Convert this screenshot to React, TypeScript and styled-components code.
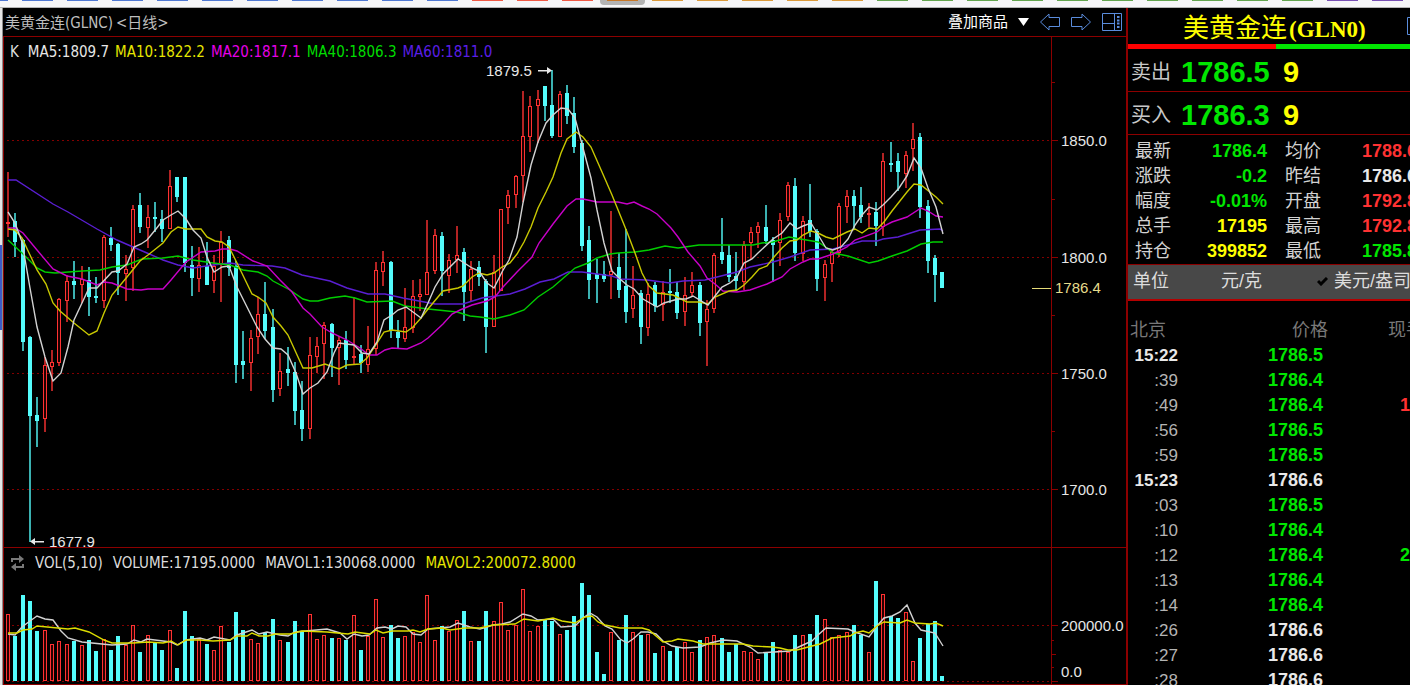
import React from "react";
import styled, { createGlobalStyle } from "styled-components";

const GlobalStyle = createGlobalStyle`
  * { box-sizing: border-box; }
  body { margin: 0; background: #000; overflow: hidden; }
  button { margin: 0; padding: 0; border: 0; background: none; color: inherit; font: inherit; cursor: pointer; }
`;

const ui = `"DejaVu Sans Condensed", "DejaVu Sans", "Noto Sans CJK SC", sans-serif`;
const num = `"Liberation Sans", "Noto Sans CJK SC", sans-serif`;

const red = "#ff3232";
const green = "#00e600";
const white = "#e8e8e8";
const yellow = "#ffff00";
const cyan = "#54fcfc";
const line = "#8c0000";

/* ---------- data ---------- */

type Candle = [kind: "R" | "C", high: number, top: number, bottom: number, low: number, volumeTop: number];

const candles: Candle[] = [
  ["R", 172, 222, 224, 237, 614], ["C", 213, 221, 242, 257, 636], ["C", 239, 240, 342, 351, 595], ["C", 336, 337, 416, 542, 601],
  ["C", 397, 415, 421, 447, 631], ["R", 357, 365, 419, 432, 630], ["R", 350, 362, 367, 391, 644], ["R", 298, 299, 363, 366, 641],
  ["R", 275, 281, 301, 322, 644], ["C", 261, 281, 285, 299, 641], ["R", 266, 279, 285, 303, 645], ["C", 267, 280, 297, 316, 640],
  ["C", 277, 296, 297, 303, 651], ["R", 235, 237, 301, 308, 639], ["C", 227, 238, 245, 251, 650], ["C", 243, 244, 273, 295, 636],
  ["R", 255, 269, 274, 301, 645], ["R", 205, 209, 268, 291, 625], ["C", 193, 205, 227, 233, 652], ["R", 205, 217, 228, 248, 635],
  ["C", 202, 217, 218, 232, 642], ["C", 210, 219, 229, 242, 650], ["R", 170, 186, 229, 229, 630], ["C", 177, 177, 197, 202, 668],
  ["C", 177, 177, 263, 272, 611], ["C", 246, 265, 278, 296, 636], ["R", 247, 265, 279, 292, 639], ["C", 242, 266, 285, 285, 644],
  ["R", 255, 266, 281, 293, 650], ["R", 231, 242, 265, 302, 626], ["C", 236, 240, 268, 276, 642], ["C", 261, 266, 365, 383, 612],
  ["C", 331, 361, 365, 379, 630], ["R", 330, 338, 363, 391, 639], ["R", 297, 314, 337, 354, 643], ["C", 282, 314, 331, 339, 633],
  ["C", 309, 327, 390, 402, 619], ["R", 353, 371, 389, 396, 640], ["C", 347, 369, 373, 386, 642], ["C", 362, 372, 411, 425, 621],
  ["C", 381, 410, 429, 441, 632], ["R", 337, 355, 429, 439, 614], ["R", 337, 346, 357, 373, 639], ["R", 322, 325, 344, 379, 635],
  ["C", 323, 324, 348, 377, 638], ["R", 336, 340, 348, 385, 638], ["C", 331, 340, 360, 369, 640], ["R", 297, 356, 357, 364, 615],
  ["C", 345, 354, 363, 373, 650], ["R", 326, 349, 365, 372, 636], ["R", 262, 270, 349, 355, 599], ["R", 251, 262, 272, 286, 637],
  ["C", 261, 262, 331, 338, 625], ["C", 320, 332, 338, 349, 638], ["R", 288, 327, 339, 342, 636], ["R", 280, 296, 328, 333, 632],
  ["R", 279, 294, 297, 311, 642], ["R", 220, 272, 295, 295, 595], ["R", 229, 235, 271, 274, 640], ["C", 232, 236, 271, 296, 626],
  ["R", 254, 260, 276, 293, 631], ["R", 226, 255, 260, 273, 620], ["C", 248, 252, 292, 321, 611], ["R", 261, 269, 291, 302, 641],
  ["C", 261, 267, 277, 286, 641], ["C", 279, 281, 327, 353, 611], ["R", 255, 272, 327, 327, 621], ["R", 209, 209, 291, 291, 602],
  ["R", 190, 195, 208, 224, 630], ["R", 175, 176, 195, 208, 625], ["R", 91, 136, 176, 202, 589], ["R", 96, 106, 137, 152, 631],
  ["R", 90, 99, 106, 143, 626], ["C", 86, 86, 106, 121, 620], ["C", 70, 105, 136, 138, 621], ["R", 91, 94, 137, 137, 634],
  ["C", 85, 93, 116, 124, 630], ["C", 97, 113, 147, 153, 616], ["C", 140, 143, 246, 251, 583], ["C", 226, 240, 280, 299, 595],
  ["C", 259, 274, 279, 303, 652], ["C", 261, 274, 279, 282, 674], ["R", 211, 271, 275, 299, 632], ["C", 253, 267, 290, 298, 640],
  ["C", 229, 286, 312, 323, 615], ["R", 266, 295, 309, 318, 632], ["C", 290, 293, 327, 344, 635], ["R", 283, 294, 328, 336, 634],
  ["C", 282, 285, 306, 312, 653], ["R", 281, 292, 305, 321, 646], ["C", 269, 291, 293, 303, 651], ["C", 282, 292, 313, 319, 647],
  ["R", 277, 295, 312, 326, 642], ["R", 272, 285, 293, 297, 652], ["C", 282, 285, 323, 336, 640], ["R", 300, 309, 322, 366, 637],
  ["R", 253, 255, 309, 313, 635], ["C", 218, 252, 260, 264, 638], ["C", 245, 255, 277, 282, 652], ["C", 252, 276, 281, 291, 644],
  ["R", 241, 245, 282, 290, 651], ["R", 227, 232, 243, 259, 652], ["R", 222, 226, 233, 248, 659], ["C", 205, 227, 241, 244, 653],
  ["C", 237, 240, 245, 282, 642], ["R", 213, 220, 243, 266, 650], ["R", 182, 185, 217, 221, 652], ["C", 178, 186, 253, 261, 635],
  ["R", 216, 221, 254, 261, 635], ["C", 184, 220, 232, 237, 634], ["C", 229, 231, 279, 291, 615], ["R", 260, 264, 278, 301, 619],
  ["R", 250, 252, 264, 282, 637], ["R", 203, 206, 253, 257, 635], ["R", 190, 196, 207, 223, 632], ["C", 190, 196, 206, 229, 625],
  ["C", 187, 205, 217, 223, 635], ["R", 203, 213, 214, 227, 652], ["C", 202, 212, 226, 246, 581], ["R", 153, 161, 227, 236, 594],
  ["C", 142, 163, 164, 172, 616], ["C", 153, 161, 172, 191, 618], ["R", 151, 155, 174, 188, 612], ["R", 123, 139, 149, 171, 661],
  ["C", 133, 137, 207, 218, 638], ["C", 200, 206, 261, 273, 624], ["C", 255, 258, 275, 302, 621], ["C", 272, 272, 288, 288, 676],
];

const averages: { color: string; points: string }[] = [
  {
    color: "#5a1ed2",
    points:
      "8,180 16,180 53,204 68,212 97,229 117,240 133,247 147,253 163,260 178,265 193,268 213,265 230,263 243,265 272,266 285,268 302,275 330,281 347,288 368,294 385,294 403,298 435,304 463,304 482,298 510,294 525,289 540,282 554,279 568,272 582,272 612,276 620,279 647,280 670,283 683,281 705,280 737,272 750,267 773,262 790,257 810,250 833,249 848,245 862,241 877,241 883,239 898,237 920,230 940,229 943,231",
  },
  {
    color: "#00cd00",
    points:
      "8,240 22,253 37,268 45,272 55,273 82,271 100,270 112,267 127,265 142,259 163,258 178,256 193,260 213,263 230,265 243,270 258,272 267,276 273,281 290,290 303,299 310,301 318,301 330,298 345,296 355,298 367,302 392,301 405,306 428,309 457,312 470,316 480,317 494,319 510,315 524,310 538,297 553,287 575,268 588,263 597,258 610,254 618,253 635,252 649,250 665,246 678,248 699,245 753,245 762,243 773,242 789,237 818,242 827,248 833,253 848,256 869,263 878,261 892,256 907,251 921,244 933,242 943,242",
  },
  {
    color: "#c800c8",
    points:
      "8,228 15,228 23,233 37,250 53,269 67,276 82,279 97,285 104,282 112,283 127,289 141,290 148,289 163,289 171,280 186,262 201,252 215,251 222,249 230,249 237,251 253,261 267,266 280,280 292,292 303,308 310,314 322,327 332,333 347,340 360,348 369,355 377,355 385,350 392,348 407,349 421,343 428,338 443,324 452,314 460,310 472,305 487,301 495,297 503,287 517,272 524,265 532,257 539,243 553,224 567,206 576,199 583,199 597,202 618,202 627,204 634,202 642,206 649,209 657,214 671,228 678,237 688,252 700,266 707,278 715,284 723,291 737,292 750,290 767,284 782,277 790,269 803,262 810,259 818,259 833,254 847,247 855,240 877,232 884,226 892,222 907,217 921,208 928,211 936,216 943,217",
  },
  {
    color: "#c8c800",
    points:
      "8,229 15,230 22,238 30,255 37,270 46,284 53,303 60,311 74,323 89,335 97,331 104,313 112,295 127,277 140,261 148,255 163,243 171,232 178,227 186,229 201,229 207,237 215,241 222,242 229,247 237,263 252,294 258,297 266,303 273,317 281,326 288,335 303,368 312,368 325,364 339,369 347,365 360,364 367,358 377,343 384,332 392,330 406,332 413,327 421,318 428,309 443,291 458,288 463,286 472,277 479,273 487,275 494,273 502,267 510,263 517,254 524,242 531,227 538,208 546,192 553,177 561,153 567,139 576,132 583,137 591,147 602,172 612,195 627,232 635,253 642,273 649,286 657,293 673,295 687,302 699,302 708,304 715,297 729,291 737,290 744,285 752,277 759,269 767,266 774,257 782,248 790,241 797,240 803,235 811,231 818,233 826,237 833,239 847,232 855,229 862,233 869,228 877,229 884,222 892,211 907,192 914,184 921,185 936,197 943,204",
  },
  {
    color: "#d2d2d2",
    points:
      "8,212 15,223 22,242 30,288 37,327 45,357 53,381 61,373 68,347 74,320 82,303 89,288 97,288 112,272 118,271 127,264 134,247 141,244 147,240 156,229 163,220 171,215 178,211 186,219 193,230 201,238 207,257 214,272 222,267 229,266 237,287 247,307 257,327 265,339 273,348 281,349 288,355 296,373 303,394 310,388 318,383 327,372 334,353 339,343 354,345 362,353 369,354 377,342 384,320 392,315 398,310 406,307 413,312 421,318 428,303 435,287 443,274 458,259 472,268 479,271 487,283 494,288 502,272 509,260 517,237 523,203 531,165 538,142 546,123 553,115 561,108 568,109 575,118 583,148 591,178 597,210 604,243 612,271 620,279 627,285 634,289 643,299 657,307 664,303 678,299 686,299 693,296 708,305 715,296 722,287 730,283 737,277 744,263 752,259 758,253 773,239 782,233 790,223 797,229 803,226 811,223 817,233 826,248 833,250 841,247 848,239 855,225 862,215 869,207 877,210 883,205 891,197 899,188 907,176 914,158 921,168 928,188 936,207 943,234",
  },
];

const volumeAverages: { color: string; points: string }[] = [
  {
    color: "#d2d2d2",
    points:
      "8,634 15,635 22,627 30,621 37,616 45,619 53,620 61,631 68,638 82,642 112,645 127,644 134,640 141,642 147,639 171,642 177,645 186,640 200,638 207,640 214,637 230,640 237,635 252,630 259,634 267,632 280,635 288,636 295,632 327,629 340,633 347,639 354,634 362,636 369,635 377,628 385,627 392,629 398,626 406,627 413,634 421,635 428,629 450,627 458,623 470,627 480,629 487,627 493,625 502,624 510,622 523,614 531,616 538,620 553,619 561,627 575,626 583,618 590,613 597,617 605,626 612,629 620,639 627,643 633,639 641,632 648,632 656,634 663,641 672,646 683,648 700,647 710,643 723,640 737,641 750,647 758,653 790,651 803,645 812,641 818,635 826,628 848,629 855,632 869,637 877,626 884,618 892,616 900,612 907,605 915,623 921,630 935,633 943,646",
  },
  {
    color: "#dcdc00",
    points:
      "8,633 17,633 23,630 32,629 37,626 68,629 75,628 89,632 104,640 112,643 133,643 148,642 163,643 171,641 178,645 186,640 200,640 213,641 230,640 237,636 247,636 252,633 259,636 268,636 275,634 290,634 302,631 327,632 348,634 355,632 370,634 376,630 383,633 392,631 408,631 413,630 420,632 428,629 442,628 450,630 465,628 480,628 493,625 515,624 524,619 538,621 553,618 562,621 575,623 585,617 592,616 598,622 605,625 620,628 642,628 649,630 663,642 672,641 678,639 693,641 703,644 743,644 753,646 772,647 780,648 788,650 797,650 812,646 820,644 832,638 850,636 855,633 863,631 869,633 877,626 884,622 900,623 907,620 915,623 930,624 936,623 943,626",
  },
];

const priceLevels = [
  { y: 140, label: "1850.0" },
  { y: 257, label: "1800.0" },
  { y: 373, label: "1750.0" },
  { y: 489, label: "1700.0" },
];

const tabColors = [
  ...Array(11).fill("#5078d2"),
  ...Array(3).fill("#f05a46"),
  "#c87828",
  ...Array(5).fill("#dc9b3c"),
  ...Array(10).fill("#64a550"),
  ...Array(2).fill("#7850b4"),
];

const quotes: [string, string, string, string, string, string][] = [
  ["最新", "1786.4", green, "均价", "1788.6", red],
  ["涨跌", "-0.2", green, "昨结", "1786.6", white],
  ["幅度", "-0.01%", green, "开盘", "1792.8", red],
  ["总手", "17195", yellow, "最高", "1792.8", red],
  ["持仓", "399852", yellow, "最低", "1785.8", green],
];

const ticks: { time: string; price: string; color: string; lots?: string; lotsColor?: string }[] = [
  { time: "15:22", price: "1786.5", color: green },
  { time: ":39", price: "1786.4", color: green },
  { time: ":49", price: "1786.4", color: green, lots: "1", lotsColor: red },
  { time: ":56", price: "1786.5", color: green },
  { time: ":59", price: "1786.5", color: green },
  { time: "15:23", price: "1786.6", color: white },
  { time: ":03", price: "1786.5", color: green },
  { time: ":10", price: "1786.4", color: green },
  { time: ":12", price: "1786.4", color: green, lots: "2", lotsColor: green },
  { time: ":13", price: "1786.4", color: green },
  { time: ":14", price: "1786.4", color: green },
  { time: ":26", price: "1786.6", color: white },
  { time: ":27", price: "1786.6", color: white },
  { time: ":28", price: "1786.6", color: white },
];

/* ---------- shell ---------- */

const Screen = styled.div`
  display: flex;
  flex-direction: column;
  height: 100vh;
  overflow: hidden;
  background: #000;
`;

const TabStrip = styled.div`
  display: flex;
  flex: none;
  height: 8px;
  overflow: hidden;
  background: #f6f6f8;
  border-bottom: 1px solid #b4b4b4;
`;

const TabStub = styled.span<{ $color: string; $active: boolean }>`
  flex: none;
  width: 45px;
  height: ${(p) => (p.$active ? 5 : 1)}px;
  border: solid ${(p) => (p.$active ? "#b4b4b4" : "transparent")};
  border-width: 0 7px;
  border-radius: 0 0 4px 4px;
  background: ${(p) => (p.$active ? "#b4b4b4" : p.$color)};
  background-clip: ${(p) => (p.$active ? "border-box" : "padding-box")};
  &:first-child { margin-left: -30px; }
  &::before {
    content: "";
    display: block;
    height: 1px;
    background: ${(p) => p.$color};
  }
`;

const Workspace = styled.div`
  display: grid;
  grid-template-columns: 3px minmax(0, 1fr) 284px;
  flex: 1;
  min-height: 0;
`;

const Edge = styled.div`
  padding-top: 237px;
  background: #e6e6e6;
  border-right: 1px solid #8c8c8c;
`;

const EdgeThumb = styled.div`
  height: 85px;
  background: #3c5ac8;
`;

/* ---------- chart ---------- */

const Chart = styled.main`
  display: flex;
  flex-direction: column;
  min-width: 0;
`;

const ChartHeader = styled.header`
  display: flex;
  align-items: center;
  justify-content: space-between;
  flex: none;
  height: 29px;
  padding: 0 4px 0 2px;
  border-bottom: 1px solid ${line};
  font: 15px/28px ${ui};
`;

const ChartTitle = styled.h1`
  display: flex;
  gap: 3px;
  margin: 0;
  padding-top: 2px;
  font: inherit;
  color: #bebebe;
  white-space: pre;
`;

const Tools = styled.div`
  display: flex;
  align-items: center;
  gap: 11px;
  color: #fff;
`;

const ToolButton = styled.button`
  display: flex;
  align-items: center;
  gap: 10px;
`;

const Pane = styled.section<{ $height: number }>`
  display: flex;
  flex: none;
  height: ${(p) => p.$height}px;
  border-left: 1px solid ${line};
  border-bottom: 1px solid ${line};
`;

const PaneMain = styled.div`
  display: flex;
  flex-direction: column;
  flex: 1;
  min-width: 0;
`;

const Legend = styled.div<{ $gap: number }>`
  display: flex;
  align-items: center;
  flex: none;
  gap: ${(p) => p.$gap}px;
  height: 22px;
  margin-top: 4px;
  padding-left: 6px;
  font: 15px/22px ${ui};
  white-space: nowrap;
`;

const LegendItem = styled.span<{ $color?: string }>`
  color: ${(p) => p.$color || "#dcdcdc"};
`;

const LegendKind = styled(LegendItem)`
  margin-right: 3px;
`;

const Plot = styled.svg`
  display: block;
  flex: 1;
  width: 100%;
  min-height: 0;
  overflow: hidden;
  font: 15px ${num};
`;

const Axis = styled.svg`
  display: block;
  flex: none;
  width: 75px;
  height: 100%;
  border-left: 1px solid ${line};
  font: 15px ${num};
`;

/* ---------- quote panel ---------- */

const Panel = styled.aside`
  display: flex;
  flex-direction: column;
  min-width: 0;
  overflow: hidden;
  border-left: 2px solid ${line};
  font: 18px/25px ${num};
`;

const PanelHeader = styled.header`
  display: flex;
  align-items: center;
  justify-content: space-between;
  flex: none;
  height: 36px;
  padding-left: 55px;
`;

const Contract = styled.h2`
  margin: 0;
  color: ${yellow};
  font: 26px/36px "Noto Sans CJK SC", sans-serif;
  white-space: nowrap;
`;

const ContractCode = styled.span`
  margin-left: 2px;
  font: bold 23px "Liberation Serif", serif;
`;

const RatioBar = styled.div`
  display: flex;
  flex: none;
  height: 5px;
`;

const Ratio = styled.span<{ $color: string; $width?: number }>`
  background: ${(p) => p.$color};
  ${(p) => (p.$width ? `width: ${p.$width}px;` : "flex: 1;")}
`;

const Depth = styled.div`
  display: flex;
  align-items: center;
  flex: none;
  height: 43px;
  padding: 4px 0 0 3px;
  border-bottom: 1px solid ${line};
`;

const DepthLabel = styled.span`
  width: 50px;
  color: #c8c8c8;
  font-size: 20px;
`;

const DepthNumber = styled.span<{ $color: string; $width?: number }>`
  width: ${(p) => (p.$width ? `${p.$width}px` : "auto")};
  color: ${(p) => p.$color};
  font-size: 29px;
  font-weight: bold;
`;

const Quotes = styled.dl`
  display: grid;
  grid-template-columns: 48px 84px 18px 60px 72px;
  flex: none;
  margin: 0;
  padding: 4px 0 0 7px;
  border-bottom: 1px solid ${line};
`;

const QuoteLabel = styled.dt<{ $second?: boolean }>`
  grid-column: ${(p) => (p.$second ? 4 : 1)};
  color: #d2d2d2;
`;

const QuoteValue = styled.dd<{ $color: string; $second?: boolean }>`
  grid-column: ${(p) => (p.$second ? 5 : 2)};
  margin: 0;
  color: ${(p) => p.$color};
  font-weight: bold;
  text-align: right;
`;

const UnitBar = styled.div`
  display: flex;
  align-items: center;
  flex: none;
  height: 36px;
  padding: 0 0 2px 5px;
  background: #484848;
  border-bottom: 2px solid #b40000;
  color: #dcdcdc;
  white-space: nowrap;
`;

const UnitLabel = styled.span`
  flex: none;
  width: 88px;
`;

const UnitButton = styled.button<{ $width: number }>`
  display: flex;
  align-items: center;
  flex: none;
  gap: 6px;
  width: ${(p) => p.$width}px;
`;

const TickTable = styled.table`
  flex: none;
  width: 320px;
  margin-top: 17px;
  border-collapse: collapse;
  table-layout: fixed;
`;

const HeadCell = styled.th<{ $width: number; $align: string; $pad: number }>`
  width: ${(p) => p.$width}px;
  height: 25px;
  padding: 0 ${(p) => p.$pad}px 0 2px;
  color: #787878;
  font-weight: normal;
  line-height: 25px;
  text-align: ${(p) => p.$align};
`;

const TimeCell = styled.td<{ $strong: boolean }>`
  height: 25px;
  padding: 0;
  color: ${(p) => (p.$strong ? white : "#b4b4b4")};
  font-size: 17px;
  font-weight: ${(p) => (p.$strong ? "bold" : "normal")};
  text-align: right;
`;

const NumberCell = styled.td<{ $color?: string; $left?: boolean }>`
  padding: ${(p) => (p.$left ? "0 0 0 72px" : "0 5px 0 0")};
  color: ${(p) => p.$color};
  font-weight: bold;
  text-align: ${(p) => (p.$left ? "left" : "right")};
`;

/* ---------- drawings ---------- */

const candleX = (i: number) => Math.round(7.357 * i + 4);

function CandleMark({ candle, index }: { candle: Candle; index: number }) {
  const [kind, high, top, bottom, low] = candle;
  const x = candleX(index);
  const color = kind === "R" ? red : cyan;
  return (
    <g>
      <rect x={x - 0.7} y={high} width={1.4} height={Math.max(low - high, 1)} fill={color} />
      {kind === "R" && bottom - top > 2 ? (
        <rect x={x - 1.5} y={top + 0.5} width={3} height={bottom - top - 1} fill="#1e0000" stroke={color} />
      ) : (
        <rect x={x - 2} y={top} width={4} height={Math.max(bottom - top, 2)} fill={color} />
      )}
    </g>
  );
}

function VolumeMark({ candle, index }: { candle: Candle; index: number }) {
  const x = candleX(index);
  const top = candle[5];
  return candle[0] === "R" ? (
    <rect x={x - 1.5} y={top + 0.5} width={3} height={681 - top - 1} fill="#280000" stroke={red} />
  ) : (
    <rect x={x - 2} y={top} width={4} height={681 - top} fill={cyan} />
  );
}

function GridLine({ y }: { y: number }) {
  return <line x1={3} x2="100%" y1={y + 0.5} y2={y + 0.5} stroke="#820000" strokeDasharray="2 3" />;
}

function Arrow({ flip }: { flip?: boolean }) {
  return (
    <svg width="20" height="18" viewBox="0 0 20 18" fill="none" stroke="#5a8cdc">
      <path d={flip ? "M19.5 9L11 1V4.5H.5V13.5H11V17Z" : "M.5 9L9 1V4.5H19.5V13.5H9V17Z"} />
    </svg>
  );
}

export default function App() {
  return (
    <Screen>
      <GlobalStyle />
      <TabStrip>
        {tabColors.map((color, i) => (
          <TabStub key={i} $color={color} $active={i === 14} />
        ))}
      </TabStrip>
      <Workspace>
        <Edge>
          <EdgeThumb />
        </Edge>
        <Chart>
          <ChartHeader>
            <ChartTitle>
              <span>美黄金连(GLNC)</span>
              <span>{"<日线>"}</span>
            </ChartTitle>
            <Tools>
              <ToolButton type="button">
                叠加商品
                <svg width="11" height="8" viewBox="0 0 11 8" fill="#fff">
                  <path d="M0 0H11L5.5 8Z" />
                </svg>
              </ToolButton>
              <ToolButton type="button" aria-label="上一个">
                <Arrow />
              </ToolButton>
              <ToolButton type="button" aria-label="下一个">
                <Arrow flip />
              </ToolButton>
              <ToolButton type="button" aria-label="布局">
                <svg width="20" height="18" viewBox="0 0 20 18" fill="none" stroke="#5a8cdc">
                  <path d="M.5 .5H19.5V17.5H.5ZM12.5 .5V17.5M.5 10.5H12.5" />
                  <path d="M15 4H17.5M15 7.500H17.5M15 10.500H17.5M15 14H17.5" strokeWidth="2" />
                </svg>
              </ToolButton>
            </Tools>
          </ChartHeader>

          <Pane $height={511}>
            <PaneMain>
              <Legend $gap={6}>
                <LegendKind>K</LegendKind>
                <LegendItem $color="#e6e6e6">MA5:1809.7</LegendItem>
                <LegendItem $color="#e6e600">MA10:1822.2</LegendItem>
                <LegendItem $color="#e600e6">MA20:1817.1</LegendItem>
                <LegendItem $color="#00dc00">MA40:1806.3</LegendItem>
                <LegendItem $color="#5a1ee6">MA60:1811.0</LegendItem>
              </Legend>
              <Plot>
                <g transform="translate(0 -63)">
                  {priceLevels.map((level) => (
                    <GridLine key={level.y} y={level.y} />
                  ))}
                  {candles.map((candle, i) => (
                    <CandleMark key={i} candle={candle} index={i} />
                  ))}
                  <g transform="translate(-4 0)" fill="none" strokeWidth="1.4">
                    {averages.map((average) => (
                      <polyline key={average.color} points={average.points} stroke={average.color} />
                    ))}
                  </g>
                  <g fill={white}>
                    <text x={482} y={76}>1879.5</text>
                    <path d="M534 70H543V67L548 70.500L543 74V71.500H534Z" />
                    <text x={45} y={547}>1677.9</text>
                    <path d="M40 541H31V538L26 541.500L31 545V542.500H40Z" />
                  </g>
                </g>
                <svg x="100%" y="0" overflow="visible">
                  <path d="M-19 225.500H0" stroke="#e6dc78" />
                </svg>
              </Plot>
            </PaneMain>
            <Axis fill="#e6e6e6">
              <g transform="translate(0 -37)">
                {priceLevels.map((level) => (
                  <g key={level.y}>
                    <path d={`M0 ${level.y}.5H6`} stroke={line} />
                    <path d={`M0 ${level.y - 58}.5H3`} stroke={line} />
                    <text x={9} y={level.y + 6}>{level.label}</text>
                  </g>
                ))}
                <text x={3} y={293} fill="#e6dc8c">1786.4</text>
              </g>
            </Axis>
          </Pane>

          <Pane $height={137}>
            <PaneMain>
              <Legend $gap={10}>
                <svg width="15" height="16" viewBox="0 0 15 16" fill="none" stroke="#787878" strokeWidth="2">
                  <path d="M2 7V4H10M13 9V12H5" />
                  <path d="M9 0L14 4L9 8ZM6 8L1 12L6 16Z" fill="#787878" stroke="none" />
                </svg>
                <LegendItem>VOL(5,10)</LegendItem>
                <LegendItem>VOLUME:17195.0000</LegendItem>
                <LegendItem>MAVOL1:130068.0000</LegendItem>
                <LegendItem $color="#e6e600">MAVOL2:200072.8000</LegendItem>
              </Legend>
              <Plot>
                <g transform="translate(0 -574)">
                  <GridLine y={625} />
                  <GridLine y={681} />
                  {candles.map((candle, i) => (
                    <VolumeMark key={i} candle={candle} index={i} />
                  ))}
                  <g transform="translate(-4 0)" fill="none" strokeWidth="1.4">
                    {volumeAverages.map((average) => (
                      <polyline key={average.color} points={average.points} stroke={average.color} />
                    ))}
                  </g>
                </g>
              </Plot>
            </PaneMain>
            <Axis fill="#e6e6e6">
              <g transform="translate(0 -548)">
                <path d="M0 625.500H6M0 640.500H2M0 654.500H4M0 667.500H2M0 681.500H6" stroke={line} />
                <text x={9} y={631}>200000.0</text>
                <text x={9} y={677}>0.0</text>
              </g>
            </Axis>
          </Pane>
        </Chart>

        <Panel>
          <PanelHeader>
            <Contract>
              美黄金连<ContractCode>(GLN0)</ContractCode>
            </Contract>
            <svg width="3" height="18" viewBox="0 0 3 18" fill="none" stroke="#5a8cdc">
              <path d="M3 .5H.5V17.5H3" />
            </svg>
          </PanelHeader>
          <RatioBar>
            <Ratio $color="#ff0000" $width={148} />
            <Ratio $color="#00e600" />
          </RatioBar>
          <Depth>
            <DepthLabel>卖出</DepthLabel>
            <DepthNumber $color={green} $width={102}>1786.5</DepthNumber>
            <DepthNumber $color={yellow}>9</DepthNumber>
          </Depth>
          <Depth>
            <DepthLabel>买入</DepthLabel>
            <DepthNumber $color={green} $width={102}>1786.3</DepthNumber>
            <DepthNumber $color={yellow}>9</DepthNumber>
          </Depth>
          <Quotes>
            {quotes.map(([label, value, color, label2, value2, color2]) => (
              <React.Fragment key={label}>
                <QuoteLabel>{label}</QuoteLabel>
                <QuoteValue $color={color}>{value}</QuoteValue>
                <QuoteLabel $second>{label2}</QuoteLabel>
                <QuoteValue $second $color={color2}>{value2}</QuoteValue>
              </React.Fragment>
            ))}
          </Quotes>
          <UnitBar>
            <UnitLabel>单位</UnitLabel>
            <UnitButton type="button" $width={96}>元/克</UnitButton>
            <UnitButton type="button" $width={110} aria-pressed>
              <svg width="11" height="9" viewBox="0 0 11 9" fill="none" stroke="#000" strokeWidth="3">
                <path d="M1 4L4 7L10 1" />
              </svg>
              美元/盎司
            </UnitButton>
          </UnitBar>
          <TickTable>
            <thead>
              <tr>
                <HeadCell scope="col" $width={50} $align="left" $pad={0}>北京</HeadCell>
                <HeadCell scope="col" $width={150} $align="right" $pad={0}>价格</HeadCell>
                <HeadCell scope="col" $width={120} $align="right" $pad={24}>现手</HeadCell>
              </tr>
            </thead>
            <tbody>
              {ticks.map((tick) => (
                <tr key={tick.time}>
                  <TimeCell $strong={tick.time.length === 5}>{tick.time}</TimeCell>
                  <NumberCell $color={tick.color}>{tick.price}</NumberCell>
                  <NumberCell $left $color={tick.lotsColor}>{tick.lots}</NumberCell>
                </tr>
              ))}
            </tbody>
          </TickTable>
        </Panel>
      </Workspace>
    </Screen>
  );
}
